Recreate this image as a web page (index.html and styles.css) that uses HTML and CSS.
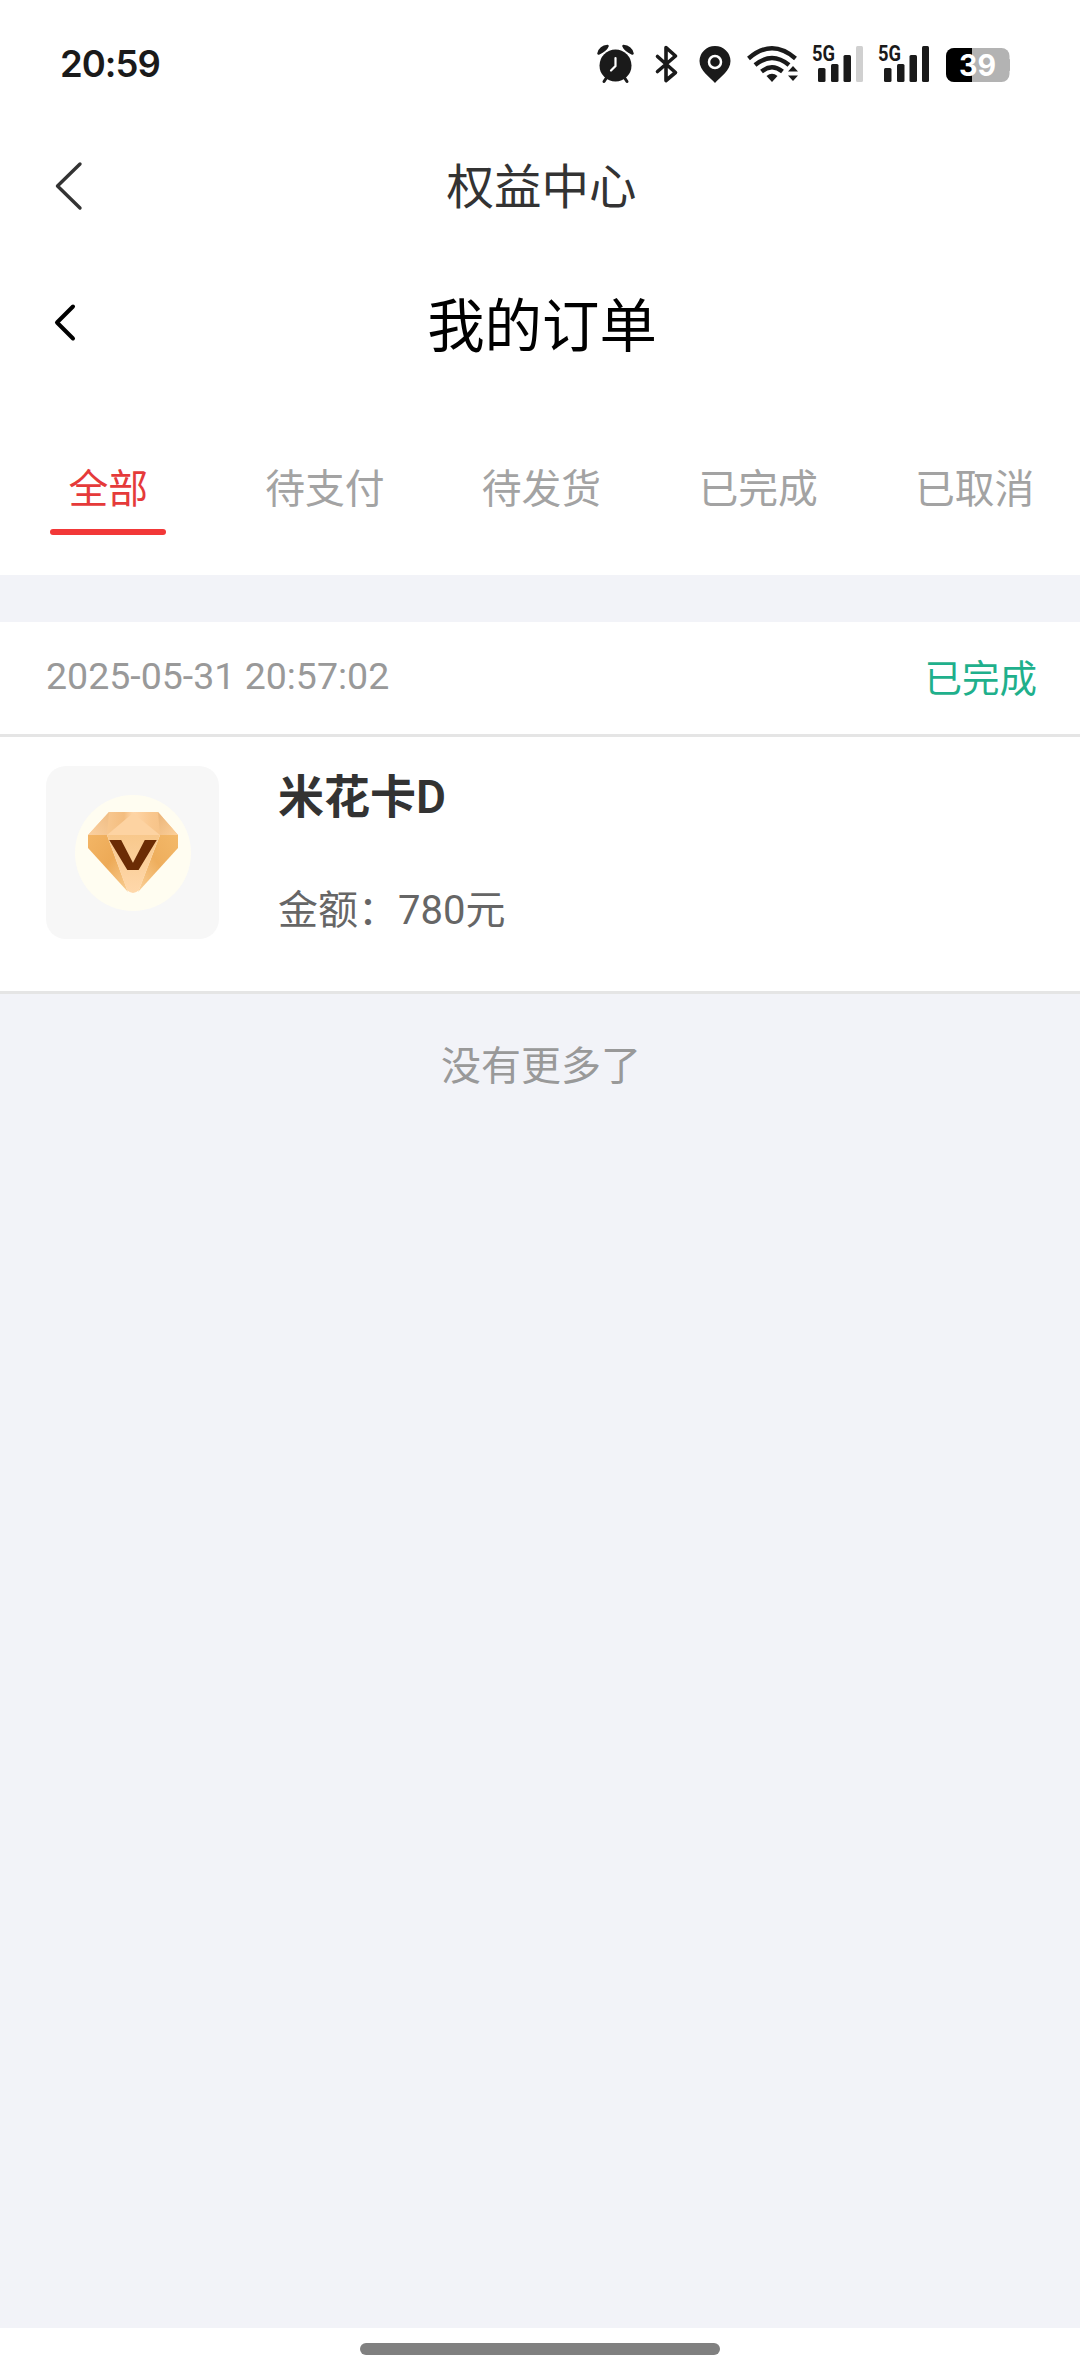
FILE: index.html
```html
<!DOCTYPE html>
<html lang="zh-CN">
<head>
<meta charset="utf-8">
<title>我的订单</title>
<link rel="stylesheet" href="styles.css">
</head>
<body>
<div class="screen">
  <header class="status-bar">
    <span class="clock">20:59</span>
    <svg class="status-icons" width="420" height="60" viewBox="590 35 420 60" fill="#1a1a1a">
      <!-- alarm -->
      <circle cx="615.5" cy="65.500" r="16"/>
      <path d="M598.500 53.500A10 10 0 0 1 607.500 46Q606 50 598.500 53.500ZM632.500 53.500A10 10 0 0 0 623.500 46Q625 50 632.500 53.500Z" stroke="#1a1a1a" stroke-width="2.500" stroke-linejoin="round"/>
      <path d="M607 77l-3 4.500M624 77l3 4.500" stroke="#1a1a1a" stroke-width="3" stroke-linecap="round"/>
      <path d="M615.500 58v8l-4.500 4.500" fill="none" stroke="#fff" stroke-width="2.200" stroke-linecap="round"/>
      <!-- bluetooth -->
      <path d="M657.500 56.500L675.500 72.500L666 80.500V47.500L675.500 56L657.500 71.500" fill="none" stroke="#1a1a1a" stroke-width="3.600" stroke-linejoin="round" stroke-linecap="round"/>
      <!-- location -->
      <path d="M715 83C710 77 699.500 71 699.500 61A15.500 15 0 0 1 730.500 61C730.500 71 720 77 715 83Z"/>
      <circle cx="715" cy="62" r="6" fill="#1a1a1a" stroke="#fff" stroke-width="2.500"/>
      <!-- wifi -->
      <g fill="none" stroke="#1a1a1a" stroke-width="4.400">
        <path d="M748.500 58.500Q772 38 795.500 58.500"/>
        <path d="M755 65Q772 51 789 65"/>
        <path d="M761.500 71.500Q772 63 782.500 71.500"/>
      </g>
      <path d="M766.500 76Q772 71.500 777.500 76L772 82Z"/>
      <path d="M788 71.500l5-5.500 5 5.500zM788 75.500l5 5.500 5-5.500z"/>
      <!-- mobile signal, two cards -->
      <g>
        <rect x="818" y="68" width="7.500" height="14" rx="1.500"/>
        <rect x="831" y="64" width="7.500" height="18" rx="1.500"/>
        <rect x="843.500" y="55" width="7.500" height="27" rx="1.500"/>
        <rect x="856" y="46" width="7" height="36" rx="1.500" fill="#d0d0d0"/>
        <text class="net" x="812" y="61" textLength="23" lengthAdjust="spacingAndGlyphs">5G</text>
      </g>
      <g>
        <rect x="884" y="68" width="7.500" height="14" rx="1.500"/>
        <rect x="897" y="64" width="7.500" height="18" rx="1.500"/>
        <rect x="909.500" y="55" width="7.500" height="27" rx="1.500"/>
        <rect x="922" y="46" width="7" height="36" rx="1.500"/>
        <text class="net" x="878" y="61" textLength="23" lengthAdjust="spacingAndGlyphs">5G</text>
      </g>
      <!-- battery -->
      <rect x="1003" y="59" width="9" height="12" rx="4" fill="#b3b3b3"/>
      <rect x="946" y="48" width="63.500" height="34" rx="8" fill="#b3b3b3"/>
      <path d="M972 48H954a8 8 0 0 0-8 8v18a8 8 0 0 0 8 8h18z" fill="#000"/>
      <text class="charge" x="959" y="76" textLength="37" lengthAdjust="spacingAndGlyphs">39</text>
    </svg>
  </header>

  <nav class="app-bar">
    <svg class="back" width="40" height="60" viewBox="0 0 40 60"><path d="M30 8L7.500 30L30 52" stroke="#333" stroke-width="3.400"/></svg>
    <h1 class="app-title">权益中心</h1>
  </nav>

  <nav class="page-bar">
    <svg class="back" width="40" height="60" viewBox="0 0 40 60"><path d="M23 13.500L7 29.500L23 45.500" stroke="#000" stroke-width="4"/></svg>
    <h2 class="page-title">我的订单</h2>
  </nav>

  <div class="tabs">
    <div class="tab active"><span>全部</span></div>
    <div class="tab"><span>待支付</span></div>
    <div class="tab"><span>待发货</span></div>
    <div class="tab"><span>已完成</span></div>
    <div class="tab"><span>已取消</span></div>
  </div>

  <main class="orders">
    <article class="order">
      <div class="order-head">
        <span class="date">2025-05-31 20:57:02</span>
        <span class="state">已完成</span>
      </div>
      <div class="order-body">
        <div class="thumb">
          <svg width="173" height="173" viewBox="46 766 173 173">
            <defs>
              <linearGradient id="left" x1="0" y1="0" x2="1" y2="1"><stop offset="0" stop-color="#f3b565"/><stop offset=".5" stop-color="#edaa57"/><stop offset="1" stop-color="#f9cd92"/></linearGradient>
              <linearGradient id="right" x1="1" y1="0" x2="0" y2="1"><stop offset="0" stop-color="#f3b969"/><stop offset=".5" stop-color="#eeae5d"/><stop offset="1" stop-color="#fbd19a"/></linearGradient>
              <linearGradient id="mid" x1="0" y1="0" x2="0" y2="1"><stop offset="0" stop-color="#f8c88c"/><stop offset="1" stop-color="#ffd8ab"/></linearGradient>
              <linearGradient id="crown" x1="0" y1="0" x2="1" y2="0"><stop offset="0" stop-color="#fdd3a2"/><stop offset=".4" stop-color="#f3bd7f"/><stop offset=".5" stop-color="#ffd6a8"/><stop offset=".7" stop-color="#f9c78e"/><stop offset="1" stop-color="#f3bd7f"/></linearGradient>
              <linearGradient id="sideL" x1="0" y1="1" x2="1" y2="0"><stop offset="0" stop-color="#fbd0a0"/><stop offset="1" stop-color="#efbd84"/></linearGradient>
              <linearGradient id="sideR" x1="0" y1="0" x2="1" y2="1"><stop offset="0" stop-color="#eab478"/><stop offset="1" stop-color="#fcd09a"/></linearGradient>
            </defs>
            <circle cx="133" cy="853" r="58" fill="#fffdf1"/>
            <path d="M109 812H158L178 835H88Z" fill="url(#crown)"/>
            <path d="M109 812L88 835H107Z" fill="url(#sideL)"/>
            <path d="M158 812L178 835H160Z" fill="url(#sideR)"/>
            <path d="M133 813L107 835H160Z" fill="#fdd3a2"/>
            <path d="M88 835H107L128 892L88 848Z" fill="url(#left)"/>
            <path d="M178 835H160L138 892L178 848Z" fill="url(#right)"/>
            <path d="M107 835H160L139 890Q133 896 127 890Z" fill="url(#mid)"/>
            <text class="gem-mark" x="109" y="870" textLength="48" lengthAdjust="spacingAndGlyphs">V</text>
          </svg>
        </div>
        <div class="info">
          <h3 class="name">米花卡D</h3>
          <p class="amount">金额：780元</p>
        </div>
      </div>
    </article>
    <p class="no-more">没有更多了</p>
  </main>

  <footer class="home-area"><div class="home-bar"></div></footer>
</div>
</body>
</html>
```

FILE: styles.css
```css
* { box-sizing: border-box; margin: 0; padding: 0; }

body {
  background: #fff;
  font-family: Roboto, "Noto Sans CJK SC", sans-serif;
  font-weight: 400;
}

.screen {
  width: 1080px;
  height: 2376px;
  display: flex;
  flex-direction: column;
  overflow: hidden;
}

.status-bar {
  height: 127px;
  display: flex;
  justify-content: space-between;
  padding: 35px 70px 0 60px;
}
.clock {
  font: 600 36.500px/58px Inter, sans-serif;
  letter-spacing: -1px;
  color: #1a1a1a;
}
.net { font: 700 22px Roboto, sans-serif; }
.charge { font: 700 30px Inter, sans-serif; fill: #fff; }

.app-bar, .page-bar {
  display: grid;
  grid-template-columns: 100px 1fr 100px;
  align-items: center;
}
.app-bar { height: 117px; }
.page-bar { height: 157px; }
.back {
  margin-left: 50px;
  fill: none;
  stroke-linecap: round;
  stroke-linejoin: round;
}
.app-title, .page-title { font-weight: 400; text-align: center; }
.app-title { font-size: 47.5px; line-height: 60px; color: #333; padding: 4px 0 0 3px; }
.page-title { font-size: 57.4px; line-height: 80px; color: #000; padding: 10px 0 0 4px; }

.tabs {
  height: 174px;
  display: grid;
  grid-template-columns: repeat(5, 216.600px);
  font-size: 39.800px;
  line-height: 60px;
  color: #a3a3a3;
}
.tab {
  display: flex;
  flex-direction: column;
  align-items: center;
  padding-top: 59px;
}
.tab.active { color: #e53a3a; }
.tab.active::after {
  content: "";
  width: 116px;
  height: 6px;
  margin-top: 9px;
  border-radius: 3px;
  background: #f23838;
}

.orders {
  flex: 1;
  background: #f2f3f8;
  padding-top: 47px;
}
.order { background: #fff; }
.order-head, .order-body { border-bottom: 3px solid #e5e5e5; }
.order-head {
  height: 115px;
  display: flex;
  justify-content: space-between;
  align-items: center;
  padding: 0 43px 5px 46px;
  font-size: 37.500px;
}
.date { color: #999; }
.state { color: #1fb08c; }
.order-body {
  height: 257px;
  display: flex;
  gap: 59px;
  padding: 29px 46px 0;
}
.thumb {
  width: 173px;
  height: 173px;
  border-radius: 20px;
  background: #f7f7f7;
}
.thumb svg { display: block; }
.gem-mark { font: 700 42px Roboto, sans-serif; fill: #6b2c05; }
.info { padding-top: 1px; }
.name {
  font-size: 46px;
  line-height: 60px;
  font-weight: 600;
  color: #333;
}
.amount {
  margin-top: 54px;
  font-size: 40px;
  line-height: 60px;
  color: #666;
}
.no-more {
  margin-top: 43px;
  padding-left: 2px;
  text-align: center;
  font-size: 40px;
  line-height: 60px;
  color: #999;
}

.home-area {
  height: 48px;
  display: flex;
  justify-content: center;
  padding-top: 15px;
}
.home-bar {
  width: 360px;
  height: 12px;
  border-radius: 6px;
  background: #808080;
}
```
